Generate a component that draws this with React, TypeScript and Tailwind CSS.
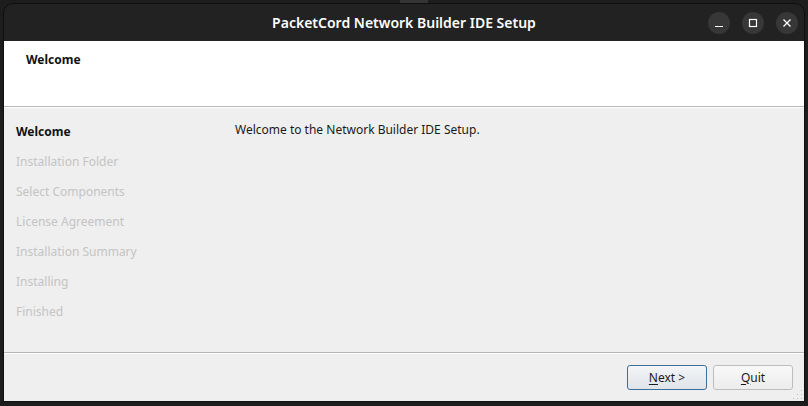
import React from "react";

const steps = [
  "Welcome",
  "Installation Folder",
  "Select Components",
  "License Agreement",
  "Installation Summary",
  "Installing",
  "Finished",
];

function WinButton({ children }: { children: React.ReactNode }) {
  return (
    <div className="w-[22px] h-[22px] rounded-full bg-[#373737] flex items-center justify-center">
      {children}
    </div>
  );
}

function Grip() {
  // little dotted resize handle in the corner
  const dots = [
    [10, 2],
    [6, 6],
    [10, 6],
    [2, 10],
    [6, 10],
    [10, 10],
  ];
  return (
    <svg width="12" height="12" className="absolute right-[1px] bottom-[1px]">
      {dots.map(([x, y], i) => (
        <rect key={i} x={x} y={y} width="1" height="1" fill="#bdbdbd" />
      ))}
    </svg>
  );
}

export default function App() {
  return (
    <div className="w-[808px] h-[406px] bg-[#1d1d1d] overflow-hidden font-['Noto_Sans',sans-serif]">
      <div className="h-[3px] flex">
        <div className="ml-[400px] w-[28px] bg-[#343434]" />
      </div>

      <div className="ml-[3px] w-[802px] h-[399px] flex flex-col rounded-t-[10px] border border-[#0f0f0f] bg-[#222222] overflow-hidden">
        {/* title bar */}
        <div className="h-[37px] grid grid-cols-[1fr_auto_1fr] items-center">
          <div />
          <div className="text-white text-[14px] font-semibold leading-none">
            PacketCord Network Builder IDE Setup
          </div>
          <div className="flex justify-end items-center gap-[12px] pr-[6px] pt-[1px]">
            <WinButton>
              <svg width="10" height="10" viewBox="0 0 10 10">
                <path d="M1 8.5h8" stroke="#fff" strokeWidth="1.2" />
              </svg>
            </WinButton>
            <WinButton>
              <svg width="10" height="10" viewBox="0 0 10 10">
                <rect x="1.5" y="1.5" width="7" height="7" fill="none" stroke="#fff" strokeWidth="1.2" />
              </svg>
            </WinButton>
            <WinButton>
              <svg width="10" height="10" viewBox="0 0 10 10">
                <path d="M1.5 1.5l7 7M8.5 1.5l-7 7" stroke="#fff" strokeWidth="1.3" />
              </svg>
            </WinButton>
          </div>
        </div>

        {/* page header */}
        <div className="h-[65px] bg-white pl-[22px] pt-[10px]">
          <div className="text-[12px] font-bold leading-[17px] text-[#111]">Welcome</div>
        </div>
        <div className="h-[2px] border-t border-[#b7b7b7] border-b border-b-white bg-white" />

        {/* steps + content */}
        <div className="flex-1 bg-[#efefef] flex">
          <div className="w-[231px] pl-[12px] pt-[9px]">
            {steps.map((s, i) => (
              <div
                key={s}
                className={
                  i === 0
                    ? "h-[30px] leading-[30px] text-[12px] font-bold text-[#111]"
                    : "h-[30px] leading-[30px] text-[12px] text-[#c4c4c4]"
                }
              >
                {s}
              </div>
            ))}
          </div>
          <div className="pt-[7px] text-[12px] leading-[30px] text-[#1a1a1a]">
            Welcome to the Network Builder IDE Setup.
          </div>
        </div>

        <div className="h-[2px] border-t border-[#b7b7b7] border-b border-b-white bg-white" />

        {/* buttons */}
        <div className="h-[47px] bg-[#efefef] relative flex justify-end items-start gap-[6px] pt-[11px] pr-[11px]">
          <button className="w-[80px] h-[25px] rounded-[3px] border border-[#3c6f9c] bg-gradient-to-b from-[#f3f5f7] to-[#dfe4e9] text-[12px] text-[#1a1a1a] leading-none">
            <span className="underline underline-offset-2">N</span>ext &gt;
          </button>
          <button className="w-[80px] h-[25px] rounded-[3px] border border-[#bdbdbd] bg-gradient-to-b from-[#f9f9f9] to-[#ececec] text-[12px] text-[#1a1a1a] leading-none">
            <span className="underline underline-offset-2">Q</span>uit
          </button>
          <Grip />
        </div>
      </div>
    </div>
  );
}
